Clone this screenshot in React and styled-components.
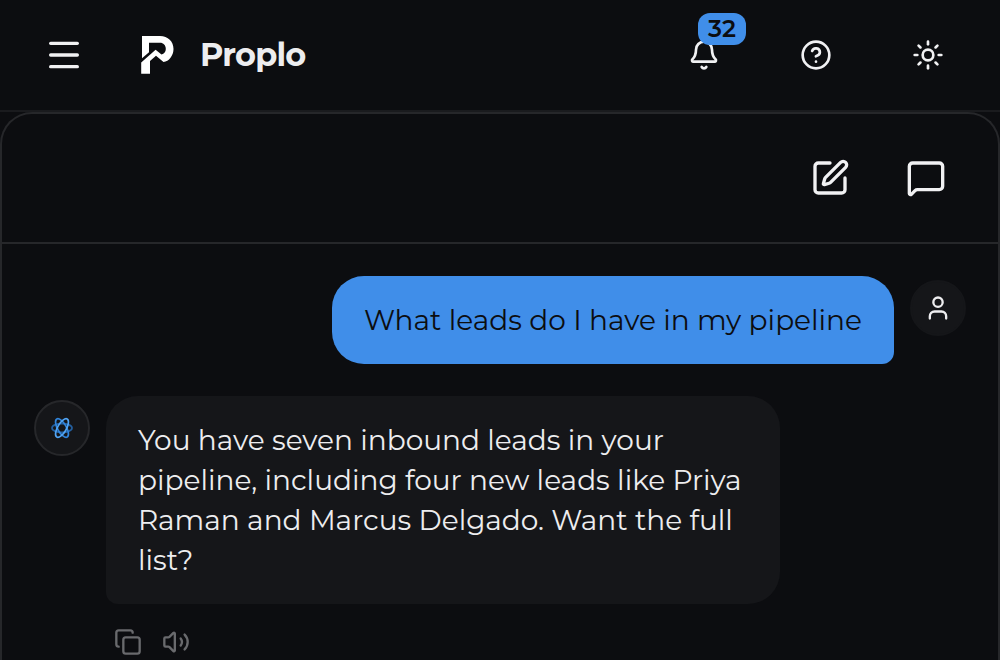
import React from "react";
import styled, { createGlobalStyle } from "styled-components";
import {
  Bell,
  CircleHelp,
  Copy,
  Menu,
  MessageSquare,
  SquarePen,
  Sun,
  User,
  Volume2,
} from "lucide-react";

const GlobalStyle = createGlobalStyle`
  * {
    box-sizing: border-box;
  }

  body {
    margin: 0;
    background: #0c0d10;
    color: #ededef;
    font-family: Montserrat, Inter, "Open Sans", sans-serif;
  }
`;

const Page = styled.div`
  display: flex;
  flex-direction: column;
  height: 660px;
  overflow: hidden;
`;

const Header = styled.header`
  display: flex;
  align-items: center;
  justify-content: space-between;
  flex: none;
  height: 112px;
  padding: 0 56px 0 44px;
  border-bottom: 2px solid #1a1b1e;
`;

const Brand = styled.div`
  display: flex;
  align-items: center;
`;

const IconButton = styled.button`
  display: flex;
  align-items: center;
  justify-content: center;
  position: relative;
  width: ${(props) => props.$size}px;
  height: ${(props) => props.$size}px;
  padding: 0;
  border: none;
  background-color: transparent;
  color: ${(props) => props.$color || "#f1f1f3"};
  font-family: inherit;
`;

const Logo = styled.svg`
  width: 36px;
  height: 42px;
  margin: 0 24px 0 56px;
`;

const BrandName = styled.span`
  font-size: 32px;
  line-height: 40px;
  font-weight: 700;
  letter-spacing: -0.8px;
`;

const HeaderActions = styled.div`
  display: flex;
  gap: 80px;
`;

const Badge = styled.span`
  position: absolute;
  top: -26px;
  left: 10px;
  width: 48px;
  height: 32px;
  border-radius: 12px;
  background: #408ee9;
  color: #0c0d10;
  font-size: 24px;
  line-height: 32px;
  font-weight: 600;
  text-align: center;
`;

const Panel = styled.main`
  flex: 1;
  border: 2px solid #26272a;
  border-bottom: none;
  border-radius: 32px 32px 0 0;
`;

const PanelHeader = styled.div`
  display: flex;
  align-items: center;
  justify-content: flex-end;
  gap: 56px;
  height: 130px;
  padding-right: 52px;
  border-bottom: 2px solid #26272a;
`;

const Conversation = styled.div`
  display: flex;
  flex-direction: column;
  gap: 32px;
  padding: 32px;
`;

const Message = styled.div`
  display: flex;
  align-items: flex-start;
  justify-content: ${(props) => (props.$own ? "flex-end" : "flex-start")};
  gap: 16px;
`;

const Bubble = styled.div`
  width: ${(props) => (props.$own ? 562 : 674)}px;
  padding: 24px 32px;
  border-radius: ${(props) =>
    props.$own ? "32px 32px 12px 32px" : "32px 32px 32px 12px"};
  background: ${(props) => (props.$own ? "#408ee9" : "#151619")};
  color: ${(props) => (props.$own ? "#0c0d10" : "#ededef")};
  font-size: 28px;
  line-height: 40px;
`;

const Avatar = styled.div`
  display: flex;
  align-items: center;
  justify-content: center;
  flex: none;
  width: 56px;
  height: 56px;
  margin-top: 4px;
  border: 2px solid ${(props) => (props.$outlined ? "#26272a" : "#151619")};
  border-radius: 50%;
  background: #151619;
`;

const MessageActions = styled.div`
  display: flex;
  gap: 20px;
  padding: 24px 0 0 8px;
`;

const ProploLogo = () => (
  <Logo viewBox="0 0 36 42" fill="#fff">
    <path d="M2 2H20C28 2 33.5 7.5 33.5 15C33.5 21.5 29 27.5 23.5 28L16 21.7L10 27V39.7H1.2V28.4L15.6 15.8L21.5 20.6C24.2 20 25.8 17.8 25.8 15C25.8 11.3 23.3 8.8 20 8.8H9V18.2L2 24.3Z" />
  </Logo>
);

const AtomIcon = () => (
  <svg width="24" height="24" viewBox="0 0 24 24" fill="none" strokeWidth="1.7">
    <ellipse cx="12" cy="12" rx="10" ry="4.4" stroke="#235f9f" />
    <ellipse
      cx="12"
      cy="12"
      rx="10.4"
      ry="4.4"
      stroke="#3185db"
      transform="rotate(60 12 12)"
    />
    <ellipse
      cx="12"
      cy="12"
      rx="10.4"
      ry="4.4"
      stroke="#51a5f5"
      transform="rotate(-60 12 12)"
    />
  </svg>
);

const App = () => {
  return (
    <>
      <GlobalStyle />
      <Page>
        <Header>
          <Brand>
            <IconButton $size={40} aria-label="Menu">
              <Menu size={40} />
            </IconButton>
            <ProploLogo />
            <BrandName>Proplo</BrandName>
          </Brand>
          <HeaderActions>
            <IconButton $size={32} aria-label="Notifications">
              <Bell size={32} />
              <Badge>32</Badge>
            </IconButton>
            <IconButton $size={32} aria-label="Help">
              <CircleHelp size={32} />
            </IconButton>
            <IconButton $size={32} aria-label="Theme">
              <Sun size={32} />
            </IconButton>
          </HeaderActions>
        </Header>
        <Panel>
          <PanelHeader>
            <IconButton $size={40} aria-label="New chat">
              <SquarePen size={40} />
            </IconButton>
            <IconButton $size={40} aria-label="Chats">
              <MessageSquare size={40} />
            </IconButton>
          </PanelHeader>
          <Conversation>
            <Message $own>
              <Bubble $own>What leads do I have in my pipeline</Bubble>
              <Avatar>
                <User size={28} />
              </Avatar>
            </Message>
            <Message>
              <Avatar $outlined>
                <AtomIcon />
              </Avatar>
              <div>
                <Bubble>
                  You have seven inbound leads in your pipeline, including four
                  new leads like Priya Raman and Marcus Delgado. Want the full
                  list?
                </Bubble>
                <MessageActions>
                  <IconButton $size={28} $color="#696a6d" aria-label="Copy">
                    <Copy size={28} />
                  </IconButton>
                  <IconButton $size={28} $color="#696a6d" aria-label="Read aloud">
                    <Volume2 size={28} />
                  </IconButton>
                </MessageActions>
              </div>
            </Message>
          </Conversation>
        </Panel>
      </Page>
    </>
  );
};

export default App;
